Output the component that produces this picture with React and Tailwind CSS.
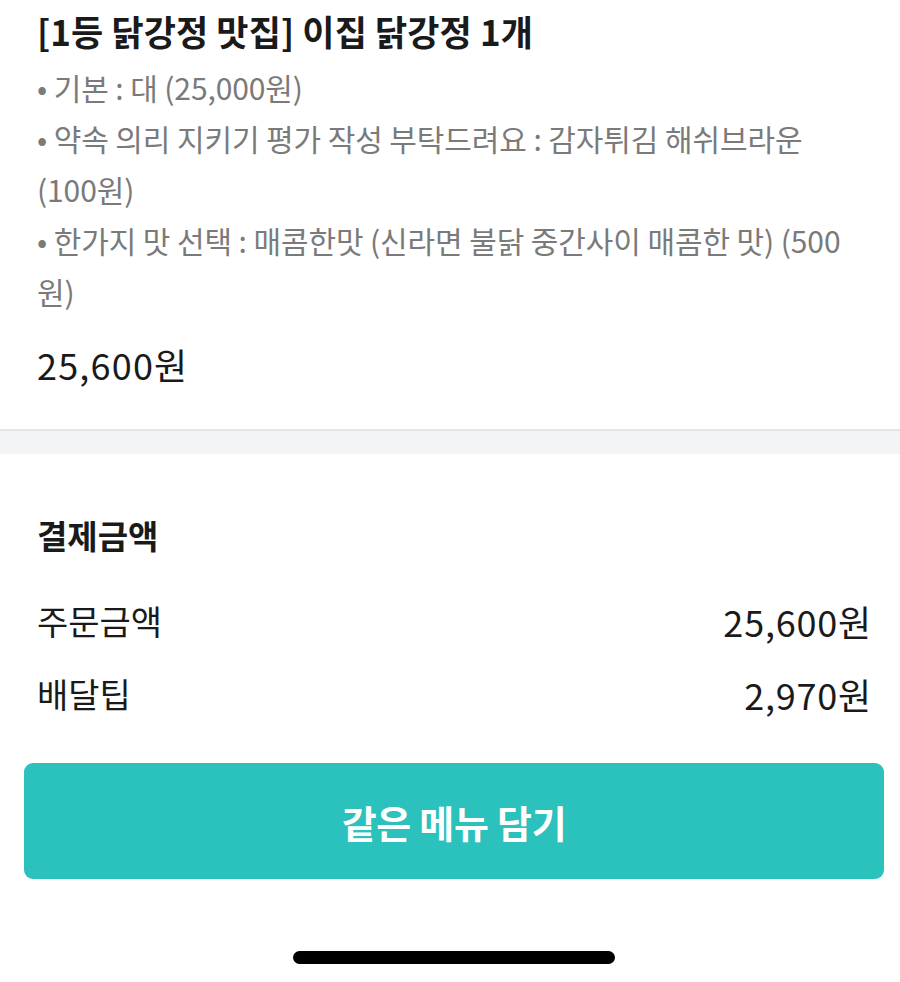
export default function App() {
  const font = { fontFamily: '"Noto Sans CJK KR", "Noto Sans", sans-serif' };
  return (
    <div className="w-[900px] h-[982px] bg-white flex flex-col overflow-hidden" style={font}>
      <div className="px-[37px] pt-[6px] pb-[40px]">
        <div className="text-[35px] font-bold text-[#1a1a1a] leading-[50px] tracking-[0.1px]">
          [1등 닭강정 맛집] 이집 닭강정 1개
        </div>
        <div className="mt-[6px] text-[30px] text-[#7a7a7a] leading-[51px] tracking-[-0.1px]">
          <div className="whitespace-nowrap">• 기본 : 대 (25,000원)</div>
          <div className="whitespace-nowrap">• 약속 의리 지키기 평가 작성 부탁드려요 : 감자튀김 해쉬브라운</div>
          <div className="whitespace-nowrap">(100원)</div>
          <div className="whitespace-nowrap">• 한가지 맛 선택 : 매콤한맛 (신라면 불닭 중간사이 매콤한 맛) (500</div>
          <div className="whitespace-nowrap">원)</div>
        </div>
        <div className="mt-[22px] text-[36px] text-[#1a1a1a] leading-[50px] tracking-[1.2px]">25,600원</div>
      </div>
      <div className="h-[25px] bg-[#f3f4f6] border-t-2 border-[#e4e5e8]" />
      <div className="pl-[37px] pr-[28px] pt-[56px]">
        <div className="text-[33px] font-bold text-[#1a1a1a] leading-[50px]">결제금액</div>
        <div className="mt-[36px] flex justify-between items-center text-[34px] text-[#1a1a1a] leading-[50px]">
          <span>주문금액</span>
          <span className="text-[36px] tracking-[0.8px]">25,600원</span>
        </div>
        <div className="mt-[23px] flex justify-between items-center text-[34px] text-[#1a1a1a] leading-[50px]">
          <span>배달팁</span>
          <span className="text-[36px] tracking-[0.8px]">2,970원</span>
        </div>
      </div>
      <div className="pl-[24px] pr-[16px] mt-[44px]">
        <div className="h-[116px] rounded-[9px] bg-[#2bc1bc] flex items-center justify-center text-white text-[38px] font-bold tracking-[-0.3px]">
          같은 메뉴 담기
        </div>
      </div>
      <div className="flex justify-center pl-[8px] mt-[72px]">
        <div className="w-[322px] h-[13px] rounded-full bg-black" />
      </div>
    </div>
  );
}
